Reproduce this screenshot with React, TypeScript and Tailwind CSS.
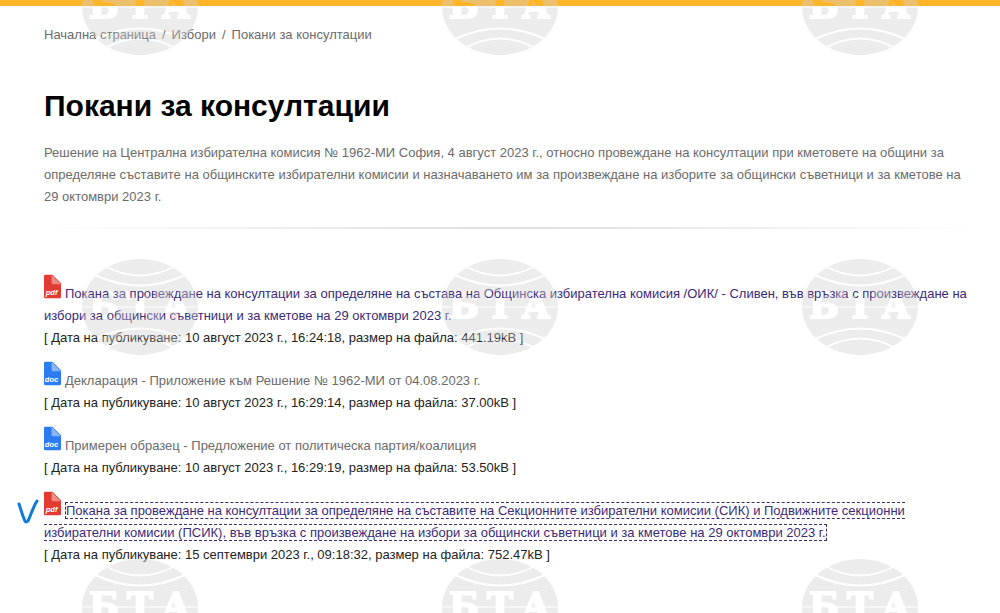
import type { ReactNode } from "react";

type FileKind = "pdf" | "doc";

interface Invitation {
  kind: FileKind;
  title: string;
  published: string;
  size: string;
  visited?: boolean;
  focused?: boolean;
}

const INVITATIONS: Invitation[] = [
  {
    kind: "pdf",
    title:
      "Покана за провеждане на консултации за определяне на състава на Общинска избирателна комисия /ОИК/ - Сливен, във връзка с произвеждане на избори за общински съветници и за кметове на 29 октомври 2023 г.",
    published: "10 август 2023 г., 16:24:18",
    size: "441.19kB",
    visited: true,
  },
  {
    kind: "doc",
    title: "Декларация - Приложение към Решение № 1962-МИ от 04.08.2023 г.",
    published: "10 август 2023 г., 16:29:14",
    size: "37.00kB",
  },
  {
    kind: "doc",
    title: "Примерен образец - Предложение от политическа партия/коалиция",
    published: "10 август 2023 г., 16:29:19",
    size: "53.50kB",
  },
  {
    kind: "pdf",
    title:
      "Покана за провеждане на консултации за определяне на съставите на Секционните избирателни комисии (СИК) и Подвижните секционни избирателни комисии (ПСИК), във връзка с произвеждане на избори за общински съветници и за кметове на 29 октомври 2023 г.",
    published: "15 септември 2023 г., 09:18:32",
    size: "752.47kB",
    visited: true,
    focused: true,
  },
];

function FileIcon({ kind }: { kind: FileKind }) {
  const pdf = kind === "pdf";
  return (
    <svg viewBox="0 0 18 25" className="mr-1 inline-block h-[25px] w-[17px] align-[-1px]" aria-hidden="true">
      <path d="M1.5 0H9l9 9v14.5a1.5 1.5 0 0 1-1.5 1.5h-15A1.5 1.5 0 0 1 0 23.500v-22A1.500 1.500 0 0 1 1.500 0z" fill={pdf ? "#e33a32" : "#2d7bf0"} />
      <path d="M8 0l10 10h-8.500A1.500 1.500 0 0 1 8 8.500z" fill={pdf ? "#f08a85" : "#8ab6f8"} />
      <text x="8" y="21" textAnchor="middle" fontSize="8" fontWeight="bold" fontStyle="italic" fill="#fff" fontFamily="Liberation Sans, sans-serif">
        {kind}
      </text>
    </svg>
  );
}

// Agency globe, tiled over the whole page
function Watermark() {
  return (
    <svg className="pointer-events-none absolute inset-0 h-full w-full" aria-hidden="true">
      <defs>
        <mask id="globe-cut" maskUnits="userSpaceOnUse" x="0" y="0" width="360" height="300">
          <ellipse cx="140" cy="150" rx="58" ry="48" fill="#fff" />
          <g fill="none" stroke="#000" strokeWidth="2">
            <path d="M103 108q37 21 74 0" />
            <path d="M93 117q47 23 94 0" />
            <path d="M93 183q47-23 94 0" />
            <path d="M103 192q37-21 74 0" />
          </g>
          <path d="M82 150h116" stroke="#000" strokeWidth="1" />
          <text x="104 140 176" y="161" textAnchor="middle" fontSize="35" fontWeight="bold" fontFamily="DejaVu Serif, serif" fill="#000" stroke="#000" strokeWidth="2">
            БТА
          </text>
        </mask>
        <pattern id="globes" width="360" height="300" patternUnits="userSpaceOnUse" y="157">
          <rect width="360" height="300" fill="#d0d0d0" fillOpacity="0.4" mask="url(#globe-cut)" />
        </pattern>
      </defs>
      <rect width="100%" height="100%" fill="url(#globes)" />
    </svg>
  );
}

function Crumb({ children }: { children: ReactNode }) {
  return (
    <li className="after:px-[6px] after:content-['/'] last:after:content-none">
      <a href="#">{children}</a>
    </li>
  );
}

function InvitationItem({ item }: { item: Invitation }) {
  const color = item.visited ? "text-[#3b2a7a]" : "text-[#6b6b6b]";
  const outline = item.focused ? "border border-dashed border-[#3b2a7a]" : "";
  return (
    <li className="relative">
      {item.focused && (
        <svg viewBox="0 0 22 26" className="absolute top-[8px] -left-[27px] h-[26px] w-[22px]" aria-hidden="true">
          <path d="M2 5c2 5 3 11 6 17q1 2 3 0C14 16 16 8 20 2" fill="none" stroke="#0d7bd8" strokeWidth="3" strokeLinecap="round" />
        </svg>
      )}
      <FileIcon kind={item.kind} />
      <a href="#" className={`${color} ${outline}`}>
        {item.title}
      </a>
      <p className="text-[#222]">
        [ Дата на публикуване: {item.published}, размер на файла: {item.size} ]
      </p>
    </li>
  );
}

export default function App() {
  return (
    <div className="relative min-h-screen overflow-hidden bg-white font-['Liberation_Sans',Arial,sans-serif] text-[13px] leading-[22px] text-[#6b6b6b]">
      <div className="h-[6px] bg-[#ffb527]" />
      <main className="pr-6 pl-11">
        <nav aria-label="Път" className="pt-[18px]">
          <ol className="flex">
            <Crumb>Начална страница</Crumb>
            <Crumb>Избори</Crumb>
            <Crumb>Покани за консултации</Crumb>
          </ol>
        </nav>
        <h1 className="mt-10 text-[30px] leading-[40px] font-bold text-black">Покани за консултации</h1>
        <p className="mt-4">
          Решение на Централна избирателна комисия № 1962-МИ София, 4 август 2023 г., относно провеждане на консултации при кметовете на общини за определяне съставите на общинските избирателни комисии и назначаването им за произвеждане на изборите за общински съветници и за кметове на 29 октомври 2023 г.
        </p>
        <hr className="mt-[19px] h-[2px] border-0 bg-linear-to-r from-transparent via-[#dedede] to-transparent" />
        <ul className="mt-[45px] space-y-3">
          {INVITATIONS.map((item) => (
            <InvitationItem key={item.title} item={item} />
          ))}
        </ul>
      </main>
      <Watermark />
    </div>
  );
}
